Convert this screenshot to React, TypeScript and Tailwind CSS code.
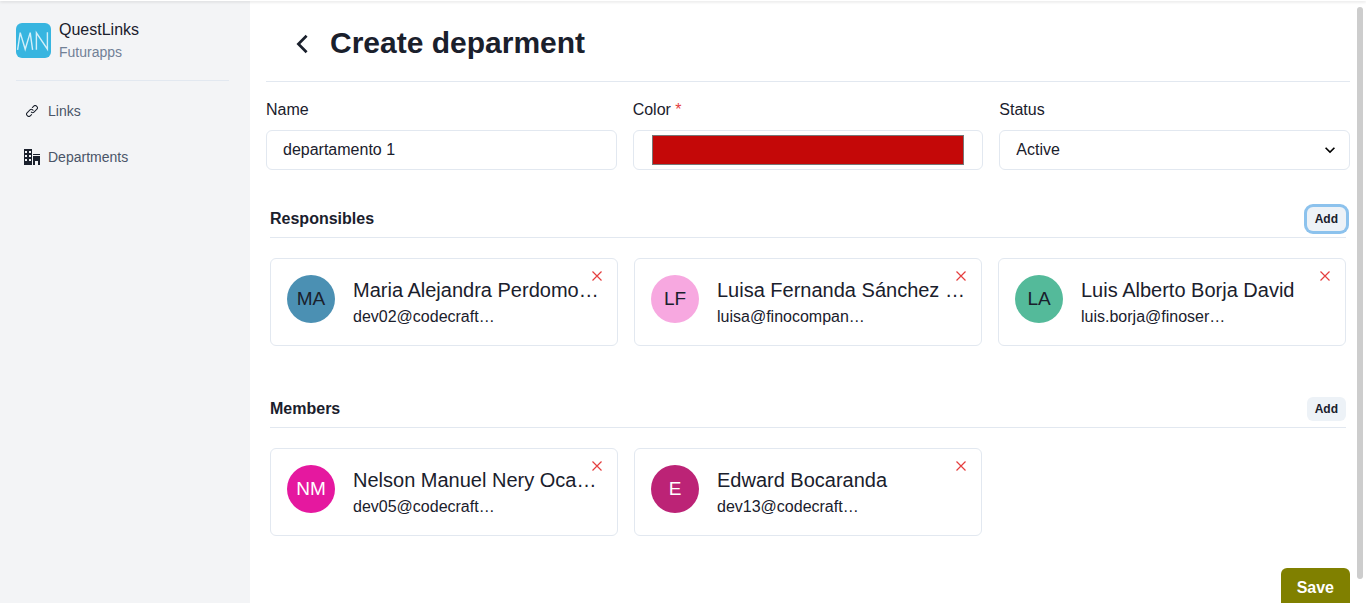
import { useId, useState } from "react";
import { ImOffice } from "react-icons/im";

type Person = { initials: string; name: string; email: string; tone: string };

const responsibles: Person[] = [
  { initials: "MA", name: "Maria Alejandra Perdomo…", email: "dev02@codecraft…", tone: "bg-[#4b90b3] text-[#1a202c]" },
  { initials: "LF", name: "Luisa Fernanda Sánchez …", email: "luisa@finocompan…", tone: "bg-[#f7a8e0] text-[#1a202c]" },
  { initials: "LA", name: "Luis Alberto Borja David", email: "luis.borja@finoser…", tone: "bg-[#54ba9a] text-[#1a202c]" },
];

const members: Person[] = [
  { initials: "NM", name: "Nelson Manuel Nery Oca…", email: "dev05@codecraft…", tone: "bg-[#e5189f] text-white" },
  { initials: "E", name: "Edward Bocaranda", email: "dev13@codecraft…", tone: "bg-[#bc2376] text-white" },
];

function LinkIcon() {
  return (
    <svg viewBox="0 0 24 24" className="mx-0.5 size-3" fill="#1a202c" aria-hidden="true">
      <path d="M10.458,18.374,7.721,21.11a2.853,2.853,0,0,1-3.942,0l-.892-.891a2.787,2.787,0,0,1,0-3.941l5.8-5.8a2.789,2.789,0,0,1,3.942,0l.893.892A1,1,0,0,0,14.94,9.952l-.893-.892a4.791,4.791,0,0,0-6.771,0l-5.8,5.8a4.787,4.787,0,0,0,0,6.77l.892.891a4.785,4.785,0,0,0,6.771,0l2.736-2.735a1,1,0,1,0-1.414-1.415Z" />
      <path d="M22.526,2.363l-.892-.892a4.8,4.8,0,0,0-6.77,0l-2.905,2.9a1,1,0,0,0,1.414,1.414l2.9-2.9a2.79,2.79,0,0,1,3.941,0l.893.893a2.786,2.786,0,0,1,0,3.942l-5.8,5.8a2.769,2.769,0,0,1-1.971.817h0a2.766,2.766,0,0,1-1.969-.816,1,1,0,1,0-1.415,1.412,4.751,4.751,0,0,0,3.384,1.4h0a4.752,4.752,0,0,0,3.385-1.4l5.8-5.8a4.786,4.786,0,0,0,0-6.77Z" />
    </svg>
  );
}

function Sidebar() {
  return (
    <aside className="w-[250px] shrink-0 bg-[#f3f4f6] px-4 pt-[17px]">
      <div className="mr-[5px] flex items-center gap-2 border-b border-[#e2e8f0] pb-[17px]">
        <svg viewBox="0 0 35 35" className="size-[35px] shrink-0 rounded-md bg-[#37b5e0]" fill="none" stroke="#d3eff9" strokeWidth="1.4" aria-hidden="true">
          <path d="M1.6 26.8 4.2 9.6 9.2 26.3 14.2 9.6 16.6 26.8M20.4 26.8V9.8L31.4 26.2V9.2" />
        </svg>
        <div>
          <p className="text-base leading-6">QuestLinks</p>
          <p className="text-sm leading-[21px] text-[#718096]">Futurapps</p>
        </div>
      </div>
      <nav className="mt-[7px] flex flex-col text-sm text-[#4a5568]">
        <a href="#links" className="flex h-[46px] items-center gap-2 pl-2">
          <LinkIcon />
          Links
        </a>
        <a href="#departments" className="flex h-[46px] items-center gap-2 pl-2">
          <ImOffice className="size-4 text-[#1a202c]" />
          Departments
        </a>
      </nav>
    </aside>
  );
}

function PersonCard({ person }: { person: Person }) {
  return (
    <li className="relative flex h-[88px] gap-[18px] rounded-md border border-[#e2e8f0] p-4">
      <span className={`flex size-12 shrink-0 items-center justify-center rounded-full text-[19px] ${person.tone}`}>
        {person.initials}
      </span>
      <div className="min-w-0 flex-1">
        <h3 className="truncate text-xl leading-[30px]">{person.name}</h3>
        <p className="text-base leading-6">{person.email}</p>
      </div>
      <button type="button" aria-label={`Remove ${person.name}`} className="absolute top-[11px] right-[14px] text-[#e53e3e]">
        <svg viewBox="0 0 12 12" className="size-3" fill="none" stroke="currentColor" strokeWidth="1.2" aria-hidden="true">
          <path d="M1.5 1.5 10.5 10.5M10.5 1.5 1.5 10.5" />
        </svg>
      </button>
    </li>
  );
}

function PeopleSection({ title, people, autoFocus = false }: { title: string; people: Person[]; autoFocus?: boolean }) {
  return (
    <section className="px-1">
      <div className="flex items-center justify-between border-b border-[#e2e8f0] pb-1.5">
        <h2 className="text-base leading-6 font-bold">{title}</h2>
        <button
          type="button"
          autoFocus={autoFocus}
          className="h-6 rounded-md bg-[#edf2f7] px-2 text-xs font-bold outline-none focus:shadow-[0_0_0_3px_#8cc2ed]"
        >
          Add
        </button>
      </div>
      <ul className="mt-5 grid grid-cols-3 gap-4">
        {people.map((person) => (
          <PersonCard key={person.email} person={person} />
        ))}
      </ul>
    </section>
  );
}

export default function App() {
  const id = useId();
  const [name, setName] = useState("departamento 1");
  const [color, setColor] = useState("#c40808");
  return (
    <div className="flex h-screen flex-col overflow-hidden bg-white font-['Liberation_Sans',Arial,sans-serif] text-[#1a202c]">
      <div className="z-10 h-px shrink-0 bg-white shadow-[0_1px_3px_rgba(0,0,0,0.2)]" />
      <div className="flex min-h-0 flex-1">
        <Sidebar />
        <main className="min-w-0 flex-1 pr-[7px] pl-4">
          <header className="flex h-[81px] items-center gap-4 border-b border-[#e2e8f0] pt-1 pl-6">
            <button type="button" aria-label="Back" className="flex size-6 items-center justify-center">
              <svg viewBox="0 0 24 24" className="size-6" fill="none" stroke="currentColor" strokeWidth="2.7" aria-hidden="true">
                <path d="M16.6 4.8 8.4 13l8.2 8.2" />
              </svg>
            </button>
            <h1 className="text-3xl leading-9 font-bold">Create deparment</h1>
          </header>
          <form>
            <div className="mt-4 grid grid-cols-3 gap-4">
              <div>
                <label htmlFor={`${id}name`} className="mb-2 block text-base leading-6">Name</label>
                <input
                  id={`${id}name`}
                  value={name}
                  onChange={(e) => setName(e.target.value)}
                  className="h-10 w-full rounded-md border border-[#e2e8f0] px-4 text-base outline-none"
                />
              </div>
              <div>
                <label htmlFor={`${id}color`} className="mb-2 block text-base leading-6">
                  Color <span className="text-[#e53e3e]">*</span>
                </label>
                <input
                  id={`${id}color`}
                  type="color"
                  value={color}
                  onChange={(e) => setColor(e.target.value)}
                  className="h-10 w-full rounded-md border border-[#e2e8f0] px-4"
                />
              </div>
              <div>
                <label htmlFor={`${id}status`} className="mb-2 block text-base leading-6">Status</label>
                <div className="relative">
                  <select id={`${id}status`} className="h-10 w-full appearance-none rounded-md border border-[#e2e8f0] bg-white pr-8 pl-4 text-base outline-none">
                    <option>Active</option>
                  </select>
                  <svg viewBox="0 0 24 24" className="pointer-events-none absolute top-[10px] right-[10px] size-5" fill="black" aria-hidden="true">
                    <path d="M16.59 8.59 12 13.17 7.41 8.59 6 10l6 6 6-6z" />
                  </svg>
                </div>
              </div>
            </div>
            <div className="mt-[35px] flex flex-col gap-[51px]">
              <PeopleSection title="Responsibles" people={responsibles} autoFocus />
              <PeopleSection title="Members" people={members} />
            </div>
            <div className="mt-8 flex justify-end">
              <button type="submit" className="h-10 rounded-md bg-[#808000] px-4 text-base font-bold text-white">Save</button>
            </div>
          </form>
        </main>
        <div className="w-[9px] shrink-0 pt-1.5" aria-hidden="true">
          <div className="h-[96%] w-1.5 rounded-full bg-[#cdcdcd]" />
        </div>
      </div>
    </div>
  );
}
